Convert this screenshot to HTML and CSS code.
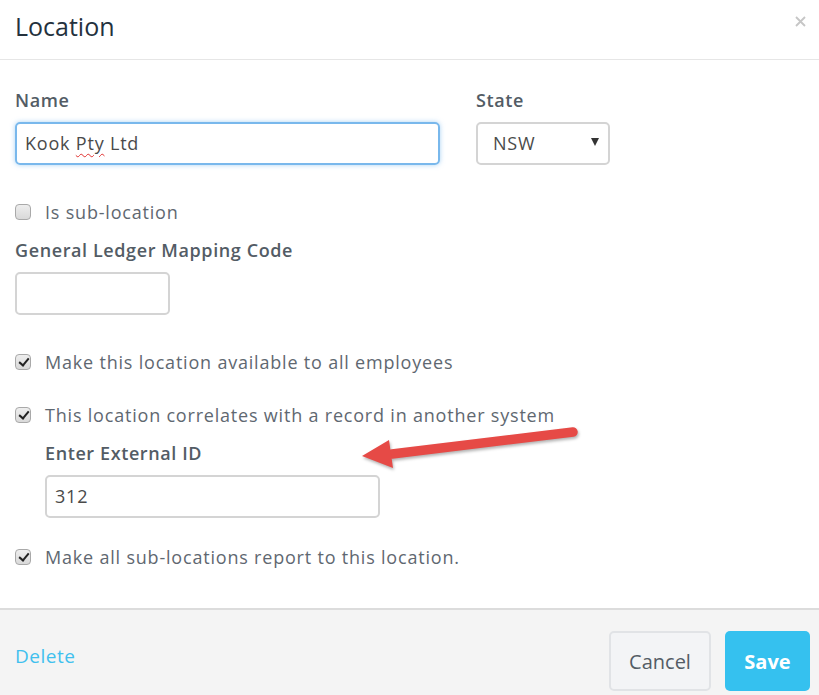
FILE: index.html
```html
<!DOCTYPE html>
<html lang="en">

<head>
    <meta charset="UTF-8">
    <meta name="viewport" content="width=device-width, initial-scale=1.0">
    <title>Location</title>

    <link rel="stylesheet" href="styles.css">
</head>

<body>
    <div class="modal">
        <div class="modal-header">
            <h1>Location</h1>
            <span class="close">
                <svg width="11" height="11" viewBox="0 0 11 11">
                    <path d="M1 1 L10 10 M10 1 L1 10" stroke="#c6c6c6" stroke-width="1.8" />
                </svg>
            </span>
        </div>

        <div class="modal-body">
            <div class="row">
                <div class="col name-col">
                    <label class="lbl">Name</label>
                    <div class="field focus">Kook <span class="typo">Pty</span> Ltd</div>
                </div>
                <div class="col">
                    <label class="lbl">State</label>
                    <div class="field select">NSW <span class="caret"></span></div>
                </div>
            </div>

            <div class="check first-check">
                <span class="box"></span>
                <span>Is sub-location</span>
            </div>

            <label class="lbl gl-lbl">General Ledger Mapping Code</label>
            <div class="field small"></div>

            <div class="check gap-lg">
                <span class="box on"></span>
                <span>Make this location available to all employees</span>
            </div>

            <div class="check gap-md">
                <span class="box on"></span>
                <span>This location correlates with a record in another system</span>
            </div>

            <div class="indent">
                <label class="lbl gl-lbl">Enter External ID</label>
                <div class="field ext">312</div>
            </div>

            <div class="check gap-last">
                <span class="box on"></span>
                <span>Make all sub-locations report to this location.</span>
            </div>
        </div>

        <div class="modal-footer">
            <a class="delete">Delete</a>
            <div class="btns">
                <button class="btn cancel">Cancel</button>
                <button class="btn save">Save</button>
            </div>
        </div>

        <!-- annotation arrow -->
        <svg class="arrow" width="240" height="55" viewBox="350 420 240 55">
            <line x1="392" y1="454" x2="573" y2="432" stroke="#e64a46" stroke-width="9.5" stroke-linecap="round" />
            <polygon points="362,456 389,440 393,468" fill="#e64a46" />
        </svg>
    </div>
</body>

</html>
```

FILE: styles.css
```css
* {
    margin: 0px;
    padding: 0px;
    box-sizing: border-box;
}

body {
    background-color: white;
    font-family: "Open Sans", Lato, sans-serif;
    color: #5d666f;
}

.modal {
    height: 100vh;
    display: flex;
    flex-direction: column;
    position: relative;
}

.modal-header {
    height: 60px;
    border-bottom: 1px solid #e6e6e6;
    display: flex;
    justify-content: space-between;
    align-items: flex-start;
    padding: 11px 13px 0 15px;
}

.modal-header h1 {
    font-size: 25px;
    font-weight: 400;
    line-height: 30px;
    color: #24313d;
}

.close {
    display: flex;
    margin-top: 5px;
}

.modal-body {
    flex: 1;
    padding: 28px 15px 0 15px;
}

.row {
    display: flex;
    gap: 36px;
}

.name-col {
    width: 425px;
}

.lbl {
    display: block;
    font-size: 18px;
    line-height: 24px;
    font-weight: 600;
    color: #535c65;
    margin-bottom: 10px;
    letter-spacing: 0.6px;
}

.field {
    height: 43px;
    border: 2px solid #d4d4d4;
    border-radius: 5px;
    font-size: 18px;
    line-height: 39px;
    padding-left: 8px;
    color: #4a4a4a;
    letter-spacing: 0.8px;
}

.focus {
    border-color: #79b8ec;
    box-shadow: 0 0 5px rgba(102, 175, 233, 0.55);
}

.typo {
    text-decoration: underline wavy #e0312f;
    text-decoration-thickness: 1px;
    text-underline-offset: 3px;
}

.select {
    width: 134px;
    padding-left: 15px;
    display: flex;
    justify-content: space-between;
    align-items: center;
    padding-right: 9px;
}

.caret {
    width: 0;
    height: 0;
    border-left: 4px solid transparent;
    border-right: 4px solid transparent;
    border-top: 8px solid #333;
    margin-top: -4px;
}

.small {
    width: 155px;
}

.check {
    display: flex;
    align-items: center;
    font-size: 18px;
    line-height: 24px;
    color: #5f6871;
    gap: 14px;
    letter-spacing: 0.8px;
}

.box {
    width: 16px;
    height: 16px;
    border: 1px solid #a9a9a9;
    border-radius: 4px;
    background: linear-gradient(#eeeeee, #d9d9d9);
    position: relative;
}

.box.on::after {
    content: "";
    position: absolute;
    left: 5px;
    top: 1px;
    width: 4px;
    height: 8px;
    border-right: 2.5px solid #222;
    border-bottom: 2.5px solid #222;
    transform: rotate(40deg);
}

.first-check {
    margin-top: 35px;
}

.gl-lbl {
    margin-top: 14px;
}

.gap-lg {
    margin-top: 35px;
}

.gap-md {
    margin-top: 29px;
}

.indent {
    padding-left: 30px;
}

.ext {
    width: 335px;
}

.gap-last {
    margin-top: 27px;
}

.modal-footer {
    height: 87px;
    border-top: 2px solid #dcdcdc;
    background-color: #f4f4f4;
    display: flex;
    justify-content: space-between;
    align-items: flex-start;
    padding: 21px 9px 0 15px;
}

.delete {
    font-size: 19px;
    color: #3fc0ee;
    line-height: 24px;
    margin-top: 13px;
    letter-spacing: 0.5px;
}

.btns {
    display: flex;
    gap: 14px;
}

.btn {
    height: 60px;
    border-radius: 5px;
    font-family: "Open Sans", Lato, sans-serif;
    font-size: 20px;
}

.cancel {
    width: 102px;
    background-color: #f3f4f6;
    border: 2px solid #e1e3e6;
    color: #535c65;
}

.save {
    width: 85px;
    background-color: #35c1ef;
    border: none;
    color: white;
    font-weight: 700;
}

.arrow {
    position: absolute;
    left: 350px;
    top: 420px;
    filter: drop-shadow(1px 2px 1.5px rgba(0, 0, 0, 0.3));
}
```
